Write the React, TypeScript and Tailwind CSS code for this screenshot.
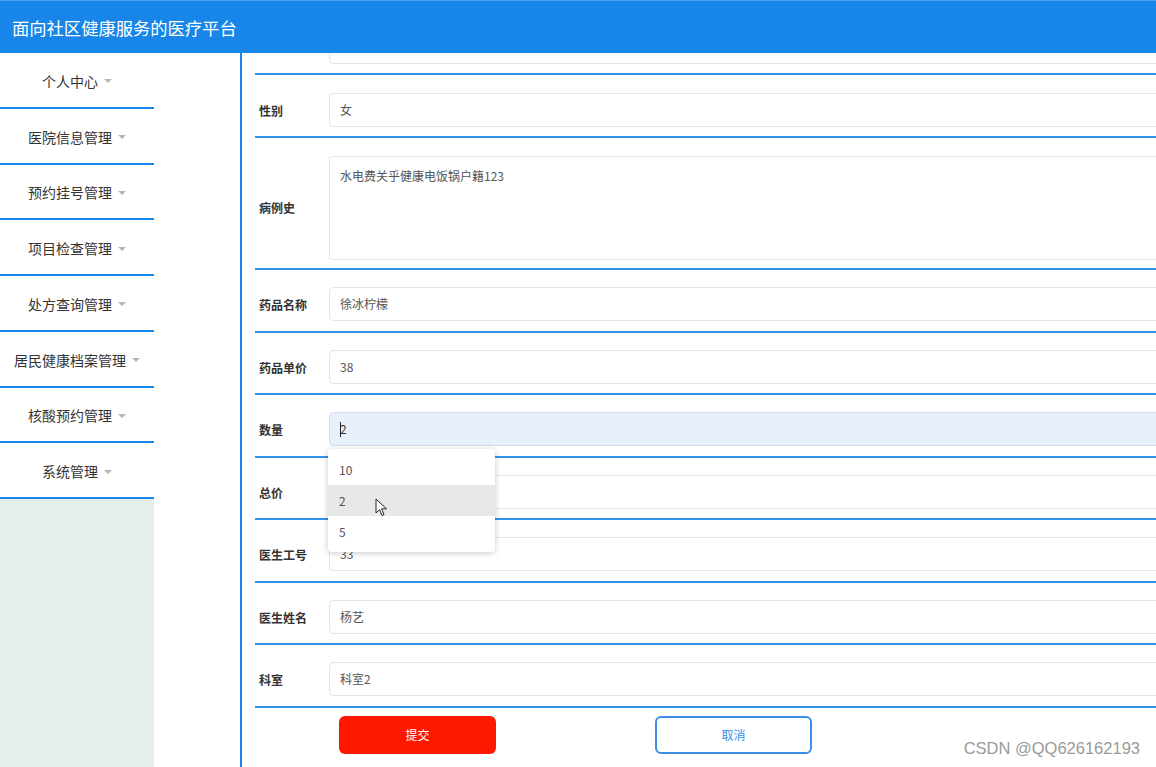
import React from "react"

const MENU = [
  "个人中心",
  "医院信息管理",
  "预约挂号管理",
  "项目检查管理",
  "处方查询管理",
  "居民健康档案管理",
  "核酸预约管理",
  "系统管理",
]

type Field = { label: string; value: string }

const FIELDS_AFTER: Field[] = [
  { label: "药品名称", value: "徐冰柠檬" },
  { label: "药品单价", value: "38" },
]

const FIELDS_TAIL: Field[] = [
  { label: "总价", value: "" },
  { label: "医生工号", value: "33" },
  { label: "医生姓名", value: "杨艺" },
  { label: "科室", value: "科室2" },
]

const font = { fontFamily: '"Noto Sans CJK SC", "Noto Sans", sans-serif' }

function Caret() {
  return (
    <span className="ml-[6px] inline-block h-0 w-0 border-x-[4px] border-t-[4px] border-x-transparent border-t-[#b5b5b5] align-middle" />
  )
}

function Row({ label, value }: { label: string; value: string }) {
  return (
    <div className="flex items-start border-b-2 border-[#3592ea] pt-[17px] pb-[9.5px]">
      <div className="w-[74px] shrink-0 pl-[4px] pt-[9px] text-[12px] font-bold text-[#333]">{label}</div>
      <div className="flex h-[34px] flex-1 items-center rounded-[4px] border border-[#e3e5ea] bg-white px-[10px] text-[12px] text-[#555]">
        {value}
      </div>
    </div>
  )
}

export default function App() {
  return (
    <div className="flex h-[767px] w-[1156px] flex-col overflow-hidden bg-white" style={font}>
      <header className="flex h-[53px] shrink-0 items-center border-t border-[#4aa3f2] bg-[#1786e8] pl-[12px] pt-[2px] text-[17.3px] text-white">
        面向社区健康服务的医疗平台
      </header>

      <div className="flex min-h-0 flex-1">
        <aside className="flex w-[154px] shrink-0 flex-col bg-[#e4efe9]">
          {MENU.map((m) => (
            <div
              key={m}
              className="flex h-[55.75px] items-center justify-center border-b-[2.5px] border-[#1786e8] bg-white pt-[3px] text-[14px] text-[#333]"
            >
              {m}
              <Caret />
            </div>
          ))}
        </aside>
        <div className="w-[88px] shrink-0 border-r-2 border-[#1786e8]" />

        <main className="relative min-w-0 flex-1 overflow-hidden pl-[13px]">
          <div className="w-[1100px]">
            <div className="h-[22px] overflow-hidden border-b-2 border-[#3592ea]">
              <div className="ml-[74px] -mt-[23px] h-[34px] rounded-[4px] border border-[#e3e5ea]" />
            </div>

            <div className="flex items-start border-b-2 border-[#3592ea] pt-[18px] pb-[9px]">
              <div className="w-[74px] shrink-0 pl-[4px] pt-[9px] text-[12px] font-bold text-[#333]">性别</div>
              <div className="flex h-[34px] flex-1 items-center rounded-[4px] border border-[#e3e5ea] px-[10px] text-[12px] text-[#555]">
                女
              </div>
            </div>

            <div className="flex items-center border-b-2 border-[#3592ea] pt-[18px] pb-[8px]">
              <div className="w-[74px] shrink-0 pl-[4px] text-[12px] font-bold text-[#333]">病例史</div>
              <div className="h-[104px] flex-1 rounded-[4px] border border-[#e3e5ea] px-[10px] pt-[10px] text-[12px] text-[#555]">
                水电费关乎健康电饭锅户籍123
              </div>
            </div>

            {FIELDS_AFTER.map((f) => (
              <Row key={f.label} label={f.label} value={f.value} />
            ))}

            <div className="flex items-start border-b-2 border-[#3592ea] pt-[17px] pb-[9.5px]">
              <div className="w-[74px] shrink-0 pl-[4px] pt-[9px] text-[12px] font-bold text-[#333]">数量</div>
              <div className="relative flex-1">
                <div className="flex h-[34px] items-center rounded-[4px] border border-[#d5dde8] bg-[#e8f0fd] px-[10px] text-[12px] text-[#333]">
                  <span className="mr-[-1px] inline-block h-[15px] w-px bg-[#222]" />2
                </div>
                <ul className="absolute left-[-1px] top-[37px] z-10 w-[167px] rounded-[4px] bg-white py-[5px] text-[12px] text-[#555] shadow-[0_1px_6px_rgba(0,0,0,0.22)]">
                  <li className="flex h-[31px] items-center pl-[11px]">10</li>
                  <li className="relative flex h-[31px] items-center bg-[#e8e8e8] pl-[11px]">
                    2
                    <svg className="absolute left-[47px] top-[13px]" width="13" height="19" viewBox="0 0 13 19">
                      <path d="M1 1 L1 15 L4.5 11.5 L7 17.5 L9 16.6 L6.6 10.8 L11.5 10.8 Z" fill="#fff" stroke="#222" strokeWidth="1" strokeLinejoin="round" />
                    </svg>
                  </li>
                  <li className="flex h-[31px] items-center pl-[11px]">5</li>
                </ul>
              </div>
            </div>

            {FIELDS_TAIL.map((f) => (
              <Row key={f.label} label={f.label} value={f.value} />
            ))}

            <div className="flex pt-[8px]">
              <button className="ml-[84px] h-[38px] w-[157px] rounded-[6px] bg-[#ff1800] text-[12px] text-white">
                提交
              </button>
              <button className="ml-[159px] h-[38px] w-[157px] rounded-[6px] border-2 border-[#3a8ee6] bg-white text-[12px] text-[#3a8ee6]">
                取消
              </button>
            </div>
          </div>

          <div
            className="absolute bottom-[6px] right-[16px] text-[16.5px] text-[#9a9a9a]"
            style={{ fontFamily: '"Liberation Sans", Arial, sans-serif' }}
          >
            CSDN @QQ626162193
          </div>
        </main>
      </div>
    </div>
  )
}
